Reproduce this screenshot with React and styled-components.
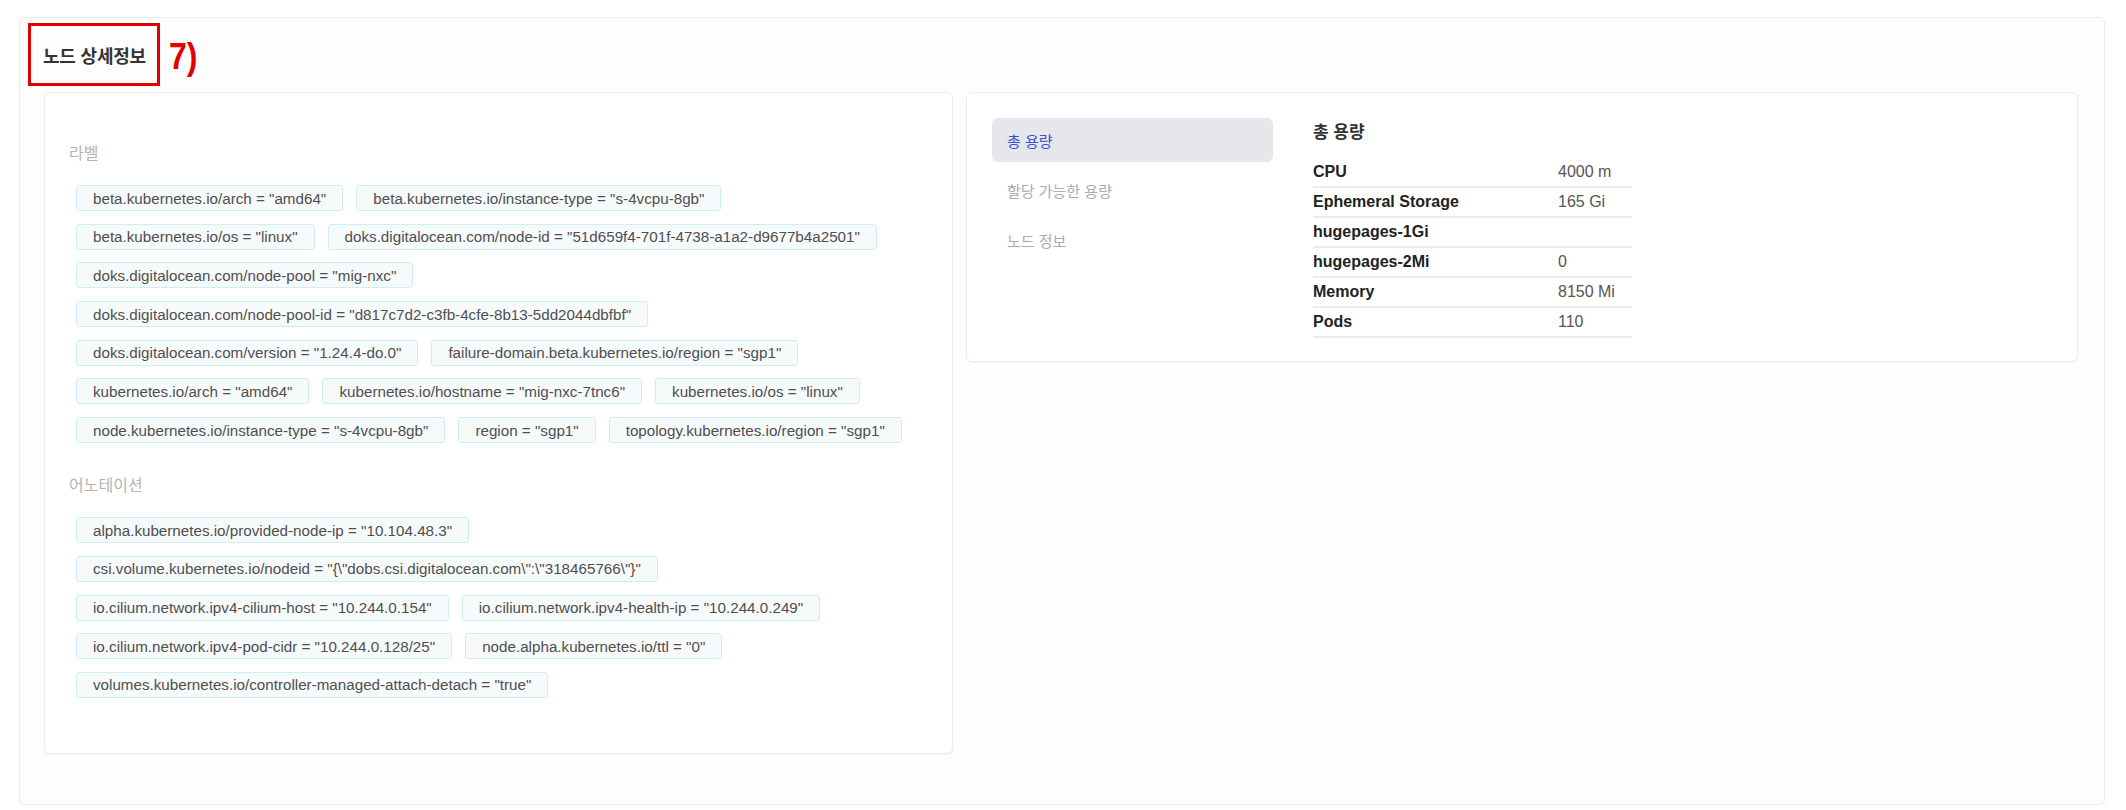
import React, { useState } from "react";
import styled, { createGlobalStyle } from "styled-components";

const GlobalStyle = createGlobalStyle`
  body {
    margin: 0;
    background: #ffffff;
    font-family: "Liberation Sans", "Noto Sans CJK KR", sans-serif;
  }
`;

const labels = [
  'beta.kubernetes.io/arch = "amd64"',
  'beta.kubernetes.io/instance-type = "s-4vcpu-8gb"',
  'beta.kubernetes.io/os = "linux"',
  'doks.digitalocean.com/node-id = "51d659f4-701f-4738-a1a2-d9677b4a2501"',
  'doks.digitalocean.com/node-pool = "mig-nxc"',
  'doks.digitalocean.com/node-pool-id = "d817c7d2-c3fb-4cfe-8b13-5dd2044dbfbf"',
  'doks.digitalocean.com/version = "1.24.4-do.0"',
  'failure-domain.beta.kubernetes.io/region = "sgp1"',
  'kubernetes.io/arch = "amd64"',
  'kubernetes.io/hostname = "mig-nxc-7tnc6"',
  'kubernetes.io/os = "linux"',
  'node.kubernetes.io/instance-type = "s-4vcpu-8gb"',
  'region = "sgp1"',
  'topology.kubernetes.io/region = "sgp1"',
];

const annotations = [
  'alpha.kubernetes.io/provided-node-ip = "10.104.48.3"',
  'csi.volume.kubernetes.io/nodeid = "{\\"dobs.csi.digitalocean.com\\":\\"318465766\\"}"',
  'io.cilium.network.ipv4-cilium-host = "10.244.0.154"',
  'io.cilium.network.ipv4-health-ip = "10.244.0.249"',
  'io.cilium.network.ipv4-pod-cidr = "10.244.0.128/25"',
  'node.alpha.kubernetes.io/ttl = "0"',
  'volumes.kubernetes.io/controller-managed-attach-detach = "true"',
];

const capacity = [
  ["CPU", "4000 m"],
  ["Ephemeral Storage", "165 Gi"],
  ["hugepages-1Gi", ""],
  ["hugepages-2Mi", "0"],
  ["Memory", "8150 Mi"],
  ["Pods", "110"],
];

const tabs = ["총 용량", "할당 가능한 용량", "노드 정보"];

const Panel = styled.section`
  margin: 17px 21px 0 19px;
  border: 1px solid #ebebeb;
  border-radius: 6px;
  background: #fdfdfd;
  box-shadow: 0 1px 2px rgba(0, 0, 0, 0.04);
  padding: 5px 26px 50px 24px;
`;

const Header = styled.div`
  display: flex;
  align-items: center;
  margin-left: -16px;
`;

const TitleBox = styled.div`
  display: flex;
  align-items: center;
  height: 63px;
  box-sizing: border-box;
  border: 3px solid #e00000;
  padding: 0 11px 0 12px;
`;

const Title = styled.h2`
  margin: 0;
  font-size: 18px;
  font-weight: 700;
  color: #333333;
  letter-spacing: -0.2px;
`;

const Marker = styled.span`
  display: inline-block;
  margin: 6px 0 0 9px;
  font-size: 32px;
  font-weight: 700;
  color: #e00000;
  transform: scaleY(1.14);
`;

const Body = styled.div`
  display: flex;
  align-items: flex-start;
  gap: 13px;
  margin-top: 6px;
`;

const Card = styled.div`
  box-sizing: border-box;
  background: #ffffff;
  border: 1px solid #ebebeb;
  border-radius: 6px;
  box-shadow: 0 1px 2px rgba(0, 0, 0, 0.04);
`;

const MetaCard = styled(Card)`
  width: 909px;
  flex: none;
  padding: 50px 32px 55px 24px;
`;

const SectionLabel = styled.div`
  font-size: 16px;
  line-height: 22px;
  color: #b4b4b4;
  margin-top: ${(p) => (p.$first ? "0" : "32px")};
`;

const TagList = styled.div`
  display: flex;
  flex-wrap: wrap;
  column-gap: 13px;
  row-gap: 12.7px;
  margin: 20px 0 0 7px;
`;

const Tag = styled.span`
  display: inline-flex;
  align-items: center;
  box-sizing: border-box;
  height: 26px;
  padding: 0 16px;
  border: 1px solid #cdeff4;
  border-radius: 3px;
  background: #f7fafb;
  font-size: 15.2px;
  color: #4f4f4f;
  white-space: nowrap;
`;

const CapacityCard = styled(Card)`
  flex: 1;
  display: flex;
  align-items: flex-start;
  padding: 25px 26px 23px 25px;
`;

const TabList = styled.nav`
  display: flex;
  flex-direction: column;
  gap: 6px;
  width: 281px;
  flex: none;
`;

const Tab = styled.button`
  display: flex;
  align-items: center;
  height: 44px;
  padding: 0 15px;
  border: none;
  border-radius: 6px;
  background: ${(p) => (p.$active ? "#e6e7eb" : "transparent")};
  color: ${(p) => (p.$active ? "#3d4fd6" : "#a5acba")};
  font-family: inherit;
  font-size: 15px;
  text-align: left;
  cursor: pointer;
`;

const Content = styled.div`
  margin-left: 40px;
  width: 319px;
`;

const ContentTitle = styled.h3`
  margin: 3px 0 13px;
  font-size: 17px;
  line-height: 24px;
  font-weight: 600;
  color: #333333;
`;

const Table = styled.table`
  width: 100%;
  border-collapse: collapse;
`;

const Row = styled.tr`
  border-bottom: 2px solid #ececec;
`;

const KeyCell = styled.th`
  width: 245px;
  height: 28px;
  padding: 0;
  text-align: left;
  font-size: 16px;
  font-weight: 700;
  color: #222222;
`;

const ValueCell = styled.td`
  padding: 0;
  font-size: 16px;
  color: #555555;
`;

export default function App() {
  const [active, setActive] = useState(0);

  return (
    <>
      <GlobalStyle />
      <Panel>
        <Header>
          <TitleBox>
            <Title>노드 상세정보</Title>
          </TitleBox>
          <Marker>7)</Marker>
        </Header>
        <Body>
          <MetaCard>
            <SectionLabel $first>라벨</SectionLabel>
            <TagList>
              {labels.map((t) => (
                <Tag key={t}>{t}</Tag>
              ))}
            </TagList>
            <SectionLabel>어노테이션</SectionLabel>
            <TagList>
              {annotations.map((t) => (
                <Tag key={t}>{t}</Tag>
              ))}
            </TagList>
          </MetaCard>
          <CapacityCard>
            <TabList>
              {tabs.map((t, i) => (
                <Tab key={t} $active={i === active} onClick={() => setActive(i)}>
                  {t}
                </Tab>
              ))}
            </TabList>
            <Content>
              <ContentTitle>총 용량</ContentTitle>
              <Table>
                <tbody>
                  {capacity.map(([k, v]) => (
                    <Row key={k}>
                      <KeyCell>{k}</KeyCell>
                      <ValueCell>{v}</ValueCell>
                    </Row>
                  ))}
                </tbody>
              </Table>
            </Content>
          </CapacityCard>
        </Body>
      </Panel>
    </>
  );
}
